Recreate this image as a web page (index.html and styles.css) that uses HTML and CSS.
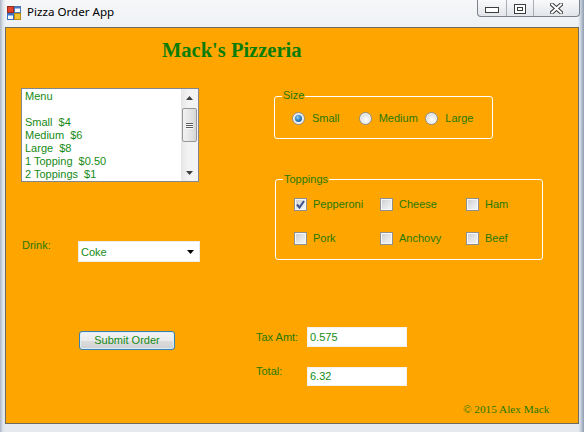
FILE: index.html
```
<!DOCTYPE html>
<html>
<head>
<meta charset="utf-8">
<title>Pizza Order App</title>
<link rel="stylesheet" href="styles.css">
</head>
<body>
<div class="window">
  <div class="titlebar">
    <svg class="app-icon" width="14" height="14" viewBox="0 0 14 14">
      <rect x="0.5" y="0.5" width="6" height="6" fill="#e0432d" stroke="#9a2a1c"/>
      <rect x="7.5" y="0.5" width="6" height="6" fill="#ffffff" stroke="#4a78b8"/>
      <rect x="7.5" y="0.5" width="6" height="2" fill="#4a78b8"/>
      <rect x="0.5" y="7.5" width="6" height="6" fill="#ffffff" stroke="#3a6fc0"/>
      <rect x="0.5" y="7.5" width="6" height="2" fill="#3a6fc0"/>
      <rect x="7.5" y="7.5" width="6" height="6" fill="#f2c232" stroke="#b88a10"/>
    </svg>
    <span class="title">Pizza Order App</span>
    <div class="controls">
      <span class="ctl min"><svg width="14" height="6" viewBox="0 0 14 6"><rect x="0.5" y="0.5" width="13" height="5" fill="#fff" stroke="#3d3d3d"/></svg></span>
      <span class="ctl max"><svg width="12" height="10" viewBox="0 0 12 10"><rect x="0.5" y="0.5" width="11" height="9" fill="#fff" stroke="#3d3d3d"/><rect x="3.5" y="3.5" width="5" height="3" fill="#fff" stroke="#3d3d3d"/></svg></span>
      <span class="ctl close"><svg width="13" height="11" viewBox="0 0 13 11"><path d="M2 1.5 L11 9.5 M11 1.5 L2 9.5" stroke="#3d3d3d" stroke-width="4" stroke-linecap="square"/><path d="M2 1.5 L11 9.5 M11 1.5 L2 9.5" stroke="#ffffff" stroke-width="2" stroke-linecap="square"/></svg></span>
    </div>
  </div>

  <div class="client">
    <h1 class="brand">Mack's Pizzeria</h1>
    <div class="main">
      <div class="left">
        <div class="listbox">
          <ul class="items">
            <li>Menu</li>
            <li>&nbsp;</li>
            <li>Small&nbsp; $4</li>
            <li>Medium&nbsp; $6</li>
            <li>Large&nbsp; $8</li>
            <li>1 Topping&nbsp; $0.50</li>
            <li>2 Toppings&nbsp; $1</li>
          </ul>
          <div class="vscroll">
            <span class="sb-btn"><svg width="7" height="4" viewBox="0 0 7 4"><path d="M0 4 L3.5 0 L7 4 Z" fill="#404040"/></svg></span>
            <span class="thumb"><span class="grip"></span><span class="grip"></span><span class="grip"></span></span>
            <span class="track"></span>
            <span class="sb-btn"><svg width="7" height="4" viewBox="0 0 7 4"><path d="M0 0 L7 0 L3.5 4 Z" fill="#404040"/></svg></span>
          </div>
        </div>

        <div class="drink-row">
          <span class="lbl drink-lbl">Drink:</span>
          <div class="combo">
            <span class="combo-text">Coke</span>
            <svg class="combo-arrow" width="7" height="4" viewBox="0 0 7 4"><path d="M0 0 L7 0 L3.5 4 Z" fill="#000"/></svg>
          </div>
        </div>

        <button class="submit">Submit Order</button>
      </div>

      <div class="right">
        <div class="group size-group">
          <span class="group-label size-label">Size</span>
          <label class="radio-item"><span class="radio checked"></span><span>Small</span></label>
          <label class="radio-item"><span class="radio"></span><span>Medium</span></label>
          <label class="radio-item"><span class="radio"></span><span>Large</span></label>
        </div>

        <div class="group toppings-group">
          <span class="group-label toppings-label">Toppings</span>
          <label class="check-item"><span class="check checked"><svg width="9" height="9" viewBox="0 0 9 9"><path d="M1 4.5 L3.5 7.5 L8 1" fill="none" stroke="#3b4f8c" stroke-width="2"/></svg></span><span>Pepperoni</span></label>
          <label class="check-item"><span class="check"></span><span>Cheese</span></label>
          <label class="check-item"><span class="check"></span><span>Ham</span></label>
          <label class="check-item"><span class="check"></span><span>Pork</span></label>
          <label class="check-item"><span class="check"></span><span>Anchovy</span></label>
          <label class="check-item"><span class="check"></span><span>Beef</span></label>
        </div>

        <div class="field-row tax-row">
          <span class="lbl field-lbl">Tax Amt:</span>
          <div class="textbox">0.575</div>
        </div>

        <div class="field-row total-row">
          <span class="lbl field-lbl total-lbl">Total:</span>
          <div class="textbox total-box">6.32</div>
        </div>

        <div class="copyright">© 2015 Alex Mack</div>
      </div>
    </div>
  </div>
</div>
</body>
</html>
```

FILE: styles.css
```
* { box-sizing: border-box; }

html, body {
  margin: 0;
  padding: 0;
}

body {
  width: 584px;
  height: 432px;
  overflow: hidden;
  background: #e3e8ee;
  font-family: "Liberation Sans", Arial, sans-serif;
}

.window {
  width: 584px;
  height: 432px;
  display: flex;
  flex-direction: column;
  background:
    linear-gradient(to right, #a9b4c4 0, #dfe5ec 3px, rgba(223,229,236,0) 6px, rgba(223,229,236,0) 578px, #d4dbe4 580px, #8e9bb0 584px),
    linear-gradient(to bottom, #f6f7f9 0, #eef1f4 28px, #e6eaef 100%);
}

/* ---------- title bar ---------- */
.titlebar {
  height: 28px;
  display: flex;
  align-items: flex-start;
  padding-left: 7px;
  flex: none;
}

.app-icon {
  margin-top: 6px;
  flex: none;
}

.title {
  margin-left: 6px;
  margin-top: 4px;
  font-family: "Noto Sans", "Open Sans", sans-serif;
  font-size: 11.6px;
  line-height: 16px;
  color: #000;
}

.controls {
  margin-left: auto;
  margin-right: 4px;
  margin-top: -1px;
  height: 18px;
  display: flex;
  border: 1px solid #7d828a;
  border-top: none;
  border-radius: 0 0 4px 4px;
  background: linear-gradient(to bottom, #fbfbfc 0, #eef0f3 50%, #e2e5ea 100%);
  overflow: hidden;
}

.ctl {
  height: 100%;
  display: flex;
  justify-content: center;
  align-items: flex-start;
}

.ctl.min {
  width: 29px;
  border-right: 1px solid #a9aeb6;
  padding-top: 8px;
}

.ctl.max {
  width: 27px;
  border-right: 1px solid #a9aeb6;
  padding-top: 5px;
}

.ctl.close {
  width: 45px;
  padding-top: 4px;
}

/* ---------- client area ---------- */
.client {
  margin: 0 6px;
  height: 395px;
  flex: none;
  background: #ffa500;
  box-shadow: 0 0 0 1px #6e6a5c;
  color: #008000;
  font-size: 11px;
  overflow: hidden;
}

.brand {
  margin: 0;
  padding: 10px 0 0 156px;
  font-family: "Liberation Serif", "Times New Roman", serif;
  font-weight: bold;
  font-size: 20.5px;
  line-height: 24px;
  color: #0a7d0a;
}

.main {
  display: flex;
}

.left {
  width: 250px;
  padding-left: 15px;
  display: flex;
  flex-direction: column;
  align-items: flex-start;
}

.right {
  display: flex;
  flex-direction: column;
  align-items: flex-start;
}

.lbl {
  font-size: 11px;
  line-height: 13px;
  color: #267a00;
}

/* ---------- list box ---------- */
.listbox {
  margin-top: 26px;
  width: 178px;
  height: 94px;
  border: 1px solid #82878f;
  background: #fff;
  display: flex;
}

.items {
  flex: 1;
  list-style: none;
  margin: 0;
  padding: 1px 0 0 3px;
  font-size: 11px;
  line-height: 13px;
  color: #168a16;
  white-space: nowrap;
}

.vscroll {
  width: 17px;
  flex: none;
  display: flex;
  flex-direction: column;
  background: linear-gradient(to right, #e6e6e6 0, #f3f3f3 40%, #f3f3f3 100%);
}

.sb-btn {
  height: 17px;
  flex: none;
  display: flex;
  align-items: center;
  justify-content: center;
}

.thumb {
  margin: 2px 0 0 1px;
  width: 15px;
  height: 34px;
  flex: none;
  border: 1px solid #979797;
  border-radius: 2px;
  background: linear-gradient(to right, #f2f2f2 0, #e6e6e6 50%, #d6d6d6 100%);
  display: flex;
  flex-direction: column;
  align-items: center;
  justify-content: center;
  gap: 1px;
}

.grip {
  width: 7px;
  height: 1px;
  background: #5d5d5d;
  box-shadow: 0 1px 0 #fafafa;
}

.track {
  flex: 1;
}

/* ---------- drink combo ---------- */
.drink-row {
  margin-top: 57px;
  display: flex;
  align-items: flex-start;
}

.drink-lbl {
  margin-left: 1px;
  width: 56px;
}

.combo {
  margin-top: 2px;
  width: 122px;
  height: 21px;
  background: #fff;
  border: 1px solid #ececec;
  display: flex;
  align-items: center;
  padding: 0 5px 0 2px;
  font-size: 11px;
  color: #168a16;
}

.combo-text {
  flex: 1;
}

/* ---------- button ---------- */
.submit {
  margin: 69px 0 0 58px;
  width: 96px;
  height: 19px;
  padding: 0;
  border: 1px solid #3c7fb1;
  border-radius: 3px;
  background: linear-gradient(to bottom, #f3f3f3 0, #ebebeb 50%, #dddddd 50%, #cfcfcf 100%);
  box-shadow: inset 0 0 0 1px #d8eefa;
  font-family: "Liberation Sans", Arial, sans-serif;
  font-size: 11px;
  line-height: 15px;
  color: #168a16;
}

/* ---------- group boxes ---------- */
.group {
  position: relative;
  border: 1px solid #ffffff;
  border-radius: 3px;
}

.group-label {
  position: absolute;
  left: 7px;
  padding: 0 1px;
  background: #ffa500;
  font-size: 11px;
  line-height: 13px;
  color: #267a00;
}

.size-label {
  top: -8px;
}

.toppings-label {
  top: -7px;
}

.size-group {
  margin: 34px 0 0 18px;
  width: 219px;
  height: 43px;
  display: flex;
  padding: 15px 0 0 17px;
}

.radio-item {
  width: 68px;
  height: 13px;
  display: flex;
  align-items: center;
  gap: 7px;
  font-size: 11px;
  line-height: 13px;
  color: #267a00;
}

.radio {
  position: relative;
  width: 13px;
  height: 13px;
  flex: none;
  border-radius: 50%;
  border: 1px solid #8c8f93;
  background: radial-gradient(circle at 55% 60%, #ffffff 0, #eeeeee 35%, #d2d4d6 75%, #c4c6c9 100%);
  box-shadow: inset 0 0 0 1px #f4f4f4;
}

.radio.checked::after {
  content: "";
  position: absolute;
  left: 2px;
  top: 2px;
  width: 7px;
  height: 7px;
  border-radius: 50%;
  background: radial-gradient(circle at 40% 35%, #9fd6f5 0, #3a8acb 40%, #144a7e 100%);
}

.toppings-group {
  margin: 40px 0 0 19px;
  width: 268px;
  height: 81px;
  display: grid;
  grid-template-columns: 86px 86px 86px;
  grid-auto-rows: 34px;
  padding: 18px 0 0 18px;
}

.check-item {
  display: flex;
  align-items: flex-start;
  gap: 6px;
  height: 13px;
  font-size: 11px;
  line-height: 13px;
  color: #267a00;
}

.check {
  width: 13px;
  height: 13px;
  flex: none;
  border: 1px solid #8e8f8f;
  background: linear-gradient(135deg, #c8cbd0 0, #e3e4e6 50%, #f6f6f6 100%);
  box-shadow: inset 0 0 0 1px #f7f7f7;
  display: flex;
  align-items: center;
  justify-content: center;
}

/* ---------- text fields ---------- */
.field-row {
  display: flex;
  align-items: center;
}

.tax-row {
  margin-top: 67px;
}

.total-row {
  margin-top: 20px;
  align-items: flex-start;
}

.field-lbl {
  width: 51px;
}

.total-lbl {
  margin-top: -2px;
}

.textbox {
  width: 100px;
  height: 20px;
  background: #fff;
  border: 1px solid #f2f2f2;
  padding-left: 2px;
  font-size: 11px;
  line-height: 18px;
  color: #168a16;
}

.total-box {
  height: 19px;
  line-height: 17px;
}

.copyright {
  margin: 17px 0 0 207px;
  font-family: "Liberation Serif", "Times New Roman", serif;
  font-size: 11.25px;
  line-height: 13px;
  color: #267a00;
}
```
